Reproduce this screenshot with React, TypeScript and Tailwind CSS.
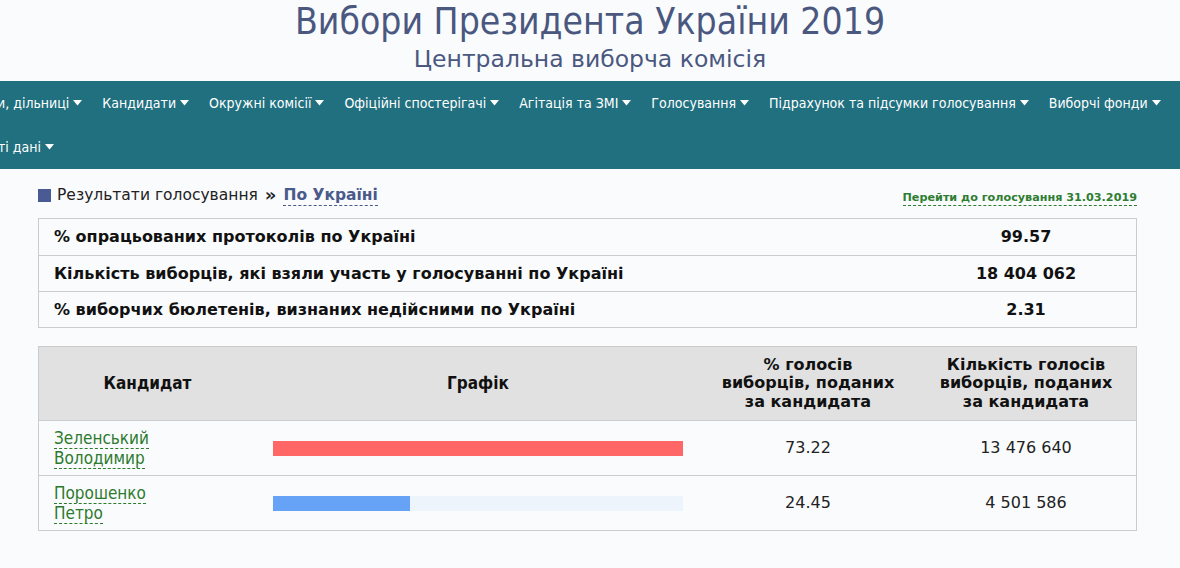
import React from "react";

const verdana = { fontFamily: '"DejaVu Sans", Verdana, sans-serif' };
const tahoma = { fontFamily: '"DejaVu Sans Condensed", "DejaVu Sans", Tahoma, sans-serif' };
const narrow = { fontFamily: '"Liberation Sans Narrow", "DejaVu Sans Condensed", "Roboto", sans-serif' };

function Caret() {
  return (
    <svg width="9" height="6" viewBox="0 0 9 6" className="ml-[4px] inline-block">
      <path d="M0 0 L9 0 L4.5 5.5 Z" fill="#ffffff" />
    </svg>
  );
}

const navRow1 = [
  "и, дільниці",
  "Кандидати",
  "Окружні комісії",
  "Офіційні спостерігачі",
  "Агітація та ЗМІ",
  "Голосування",
  "Підрахунок та підсумки голосування",
  "Виборчі фонди",
];

const info = [
  ["% опрацьованих протоколів по Україні", "99.57"],
  ["Кількість виборців, які взяли участь у голосуванні по Україні", "18 404 062"],
  ["% виборчих бюлетенів, визнаних недійсними по Україні", "2.31"],
];

const candidates = [
  { first: "Зеленський", second: "Володимир", pct: "73.22", votes: "13 476 640", bar: 100, color: "#ff6666" },
  { first: "Порошенко", second: "Петро", pct: "24.45", votes: "4 501 586", bar: 33.4, color: "#66a3f7" },
];

export default function App() {
  return (
    <div className="w-[1180px] h-[568px] overflow-hidden bg-[#fafbfd]" style={tahoma}>
      <div className="flex flex-col items-center pt-[2px]">
        <div className="text-[37px] leading-[40px] text-[#4a5880]">Вибори Президента України 2019</div>
        <div className="text-[23.5px] leading-[30px] text-[#4a5880] mt-[2px]" style={verdana}>
          Центральна виборча комісія
        </div>
      </div>
      <nav className="mt-[7px] h-[88px] bg-[#21707f] text-white text-[14px] overflow-hidden">
        <div className="flex items-center h-[44px] ml-[-3px]">
          {navRow1.map((t, i) => (
            <div key={i} className="flex items-center whitespace-nowrap pr-[20px]">
              {t}
              <Caret />
            </div>
          ))}
        </div>
        <div className="flex items-center h-[44px] ml-[-2px]">
          <div className="flex items-center whitespace-nowrap">
            ті дані
            <Caret />
          </div>
        </div>
      </nav>
      <div className="ml-[38px] w-[1099px]">
        <div className="flex items-end justify-between h-[42px] pb-[4px]">
          <div className="flex items-center text-[15.5px] text-[#222]" style={verdana}>
            <span className="w-[13px] h-[13px] bg-[#4a5a95] mr-[6px] inline-block" />
            <span>Результати голосування</span>
            <span className="font-bold mx-[7px] text-[18px] leading-none">»</span>
            <span className="font-bold text-[#4a5a8a] border-b border-dashed border-[#4a5a8a] leading-[20px]">
              По Україні
            </span>
          </div>
          <span
            className="text-[11.2px] font-bold text-[#2e7d32] border-b border-dashed border-[#2e7d32] leading-[14px] mb-[1px]"
            style={verdana}
          >
            Перейти до голосування 31.03.2019
          </span>
        </div>
        <div className="mt-[7px] border border-[#cccccc]" style={verdana}>
          {info.map(([l, v], i) => (
            <div key={i} className={`flex items-center h-[36px] ${i > 0 ? "border-t border-[#cccccc]" : ""}`}>
              <div className="flex-1 pl-[15px] text-[16px] font-bold text-[#111]">{l}</div>
              <div className="w-[220px] text-center text-[16px] font-bold text-[#111]">{v}</div>
            </div>
          ))}
        </div>
        <div className="mt-[18px] border border-[#cccccc]">
          <div className="flex items-center h-[73px] bg-[#e1e1e1] text-[#111] font-bold">
            <div className="w-[217px] text-center text-[17px]" style={narrow}>Кандидат</div>
            <div className="w-[444px] text-center text-[17px]" style={narrow}>Графік</div>
            <div className="w-[216px] text-center text-[16px] leading-[18.5px]" style={verdana}>
              % голосів
              <br />
              виборців, поданих
              <br />
              за кандидата
            </div>
            <div className="flex-1 text-center text-[16px] leading-[18.5px]" style={verdana}>
              Кількість голосів
              <br />
              виборців, поданих
              <br />
              за кандидата
            </div>
          </div>
          {candidates.map((c, i) => (
            <div key={i} className="flex items-center h-[55px] border-t border-[#cccccc]">
              <div className="w-[217px] pl-[15px] text-[17px] leading-[20px] text-[#2c7a2c]" style={narrow}>
                <span className="border-b border-dashed border-[#2c7a2c]">{c.first}</span>
                <br />
                <span className="border-b border-dashed border-[#2c7a2c]">{c.second}</span>
              </div>
              <div className="w-[444px] pl-[17px] pr-[17px]">
                <div className="h-[15px] w-[410px] bg-[#eef4fc]">
                  <div className="h-full" style={{ width: `${c.bar}%`, backgroundColor: c.color }} />
                </div>
              </div>
              <div className="w-[216px] text-center text-[16px] text-[#222]" style={verdana}>{c.pct}</div>
              <div className="flex-1 text-center text-[16px] text-[#222]" style={verdana}>{c.votes}</div>
            </div>
          ))}
        </div>
      </div>
    </div>
  );
}
